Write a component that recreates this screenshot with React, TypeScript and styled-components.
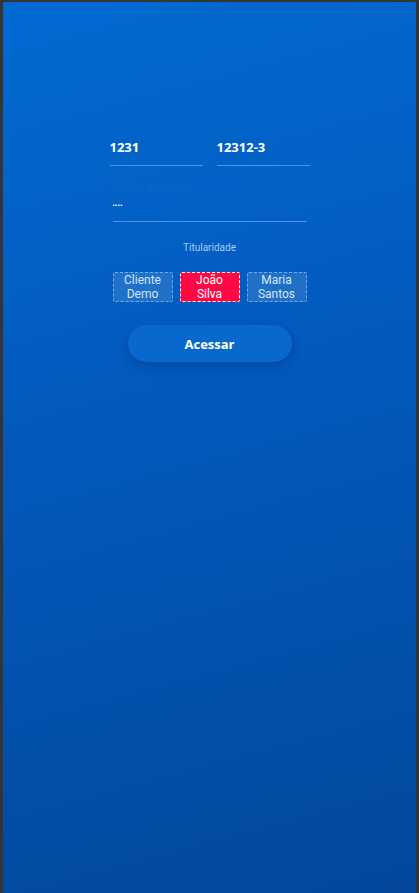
import React, { useState } from 'react'
import styled, { createGlobalStyle } from 'styled-components'

const GlobalStyle = createGlobalStyle`
  html, body {
    margin: 0;
    padding: 0;
    background: #353535;
  }
  body {
    padding: 2px 3px 0 3px;
    font-family: "Open Sans", "Liberation Sans", sans-serif;
  }
  * { box-sizing: border-box; }
`

const Screen = styled.main`
  min-height: 891px;
  background: linear-gradient(165deg, #016ad3 0%, #0359bb 45%, #02479c 100%);
  display: flex;
  justify-content: center;
  padding-top: 132px;
`

const Form = styled.form`
  width: 200px;
  display: flex;
  flex-direction: column;
  align-items: center;
`

const Row = styled.div`
  width: 100%;
  display: flex;
  gap: 14px;
`

const Field = styled.input`
  flex: 1;
  min-width: 0;
  background: transparent;
  border: none;
  border-bottom: 1px solid rgba(140, 190, 255, 0.55);
  padding: 5px 0 10px;
  font-family: "Open Sans", "Liberation Sans", sans-serif;
  font-weight: 700;
  font-size: 13px;
  line-height: 16px;
  color: #ffffff;
  outline: none;
`

const PasswordBlock = styled.label`
  width: 194px;
  margin-top: 14px;
  display: flex;
  flex-direction: column;
`

const FieldLabel = styled.span`
  font-size: 11px;
  line-height: 14px;
  color: #1165cd;
`

const PasswordInput = styled.input`
  background: transparent;
  border: none;
  border-bottom: 1px solid rgba(140, 190, 255, 0.55);
  padding: 5px 0 10px;
  font-size: 6px;
  line-height: 12px;
  letter-spacing: 0.5px;
  color: #ffffff;
  outline: none;
`

const Caption = styled.div`
  margin-top: 20px;
  font-family: Roboto, "Liberation Sans", sans-serif;
  font-size: 10px;
  line-height: 12px;
  color: #a9cdf5;
`

const Chips = styled.div`
  margin-top: 18px;
  display: flex;
  gap: 7px;
`

const Chip = styled.button<{ $active?: boolean }>`
  width: 60px;
  height: 30px;
  padding: 0;
  border-radius: 2px;
  border: 1px dashed ${p => (p.$active ? '#ffffff' : 'rgba(170, 205, 250, 0.6)')};
  background: ${p => (p.$active ? '#ff0844' : 'rgba(255, 255, 255, 0.12)')};
  color: ${p => (p.$active ? '#ffffff' : '#d3e5fb')};
  font-family: Roboto, "Liberation Sans", sans-serif;
  font-size: 12px;
  line-height: 14px;
  white-space: pre-line;
  cursor: pointer;
`

const Submit = styled.button`
  margin-top: 23px;
  width: 164px;
  height: 37px;
  border: none;
  border-radius: 19px;
  background: #0968cc;
  box-shadow: 0 4px 12px rgba(0, 30, 80, 0.28);
  color: #ffffff;
  font-family: "Open Sans", "Liberation Sans", sans-serif;
  font-weight: 700;
  font-size: 13px;
  cursor: pointer;
`

const holders = ['Cliente\nDemo', 'João\nSilva', 'Maria\nSantos']

export default function App() {
  const [holder, setHolder] = useState(1)

  return (
    <>
      <GlobalStyle />
      <Screen>
        <Form onSubmit={e => e.preventDefault()}>
          <Row>
            <Field defaultValue="1231" />
            <Field defaultValue="12312-3" />
          </Row>
          <PasswordBlock>
            <FieldLabel>Senha 4 Digitos</FieldLabel>
            <PasswordInput type="password" defaultValue="1234" />
          </PasswordBlock>
          <Caption>Titularidade</Caption>
          <Chips>
            {holders.map((name, index) => (
              <Chip
                type="button"
                key={index}
                $active={holder === index}
                onClick={() => setHolder(index)}
              >
                {name}
              </Chip>
            ))}
          </Chips>
          <Submit type="submit">Acessar</Submit>
        </Form>
      </Screen>
    </>
  )
}
